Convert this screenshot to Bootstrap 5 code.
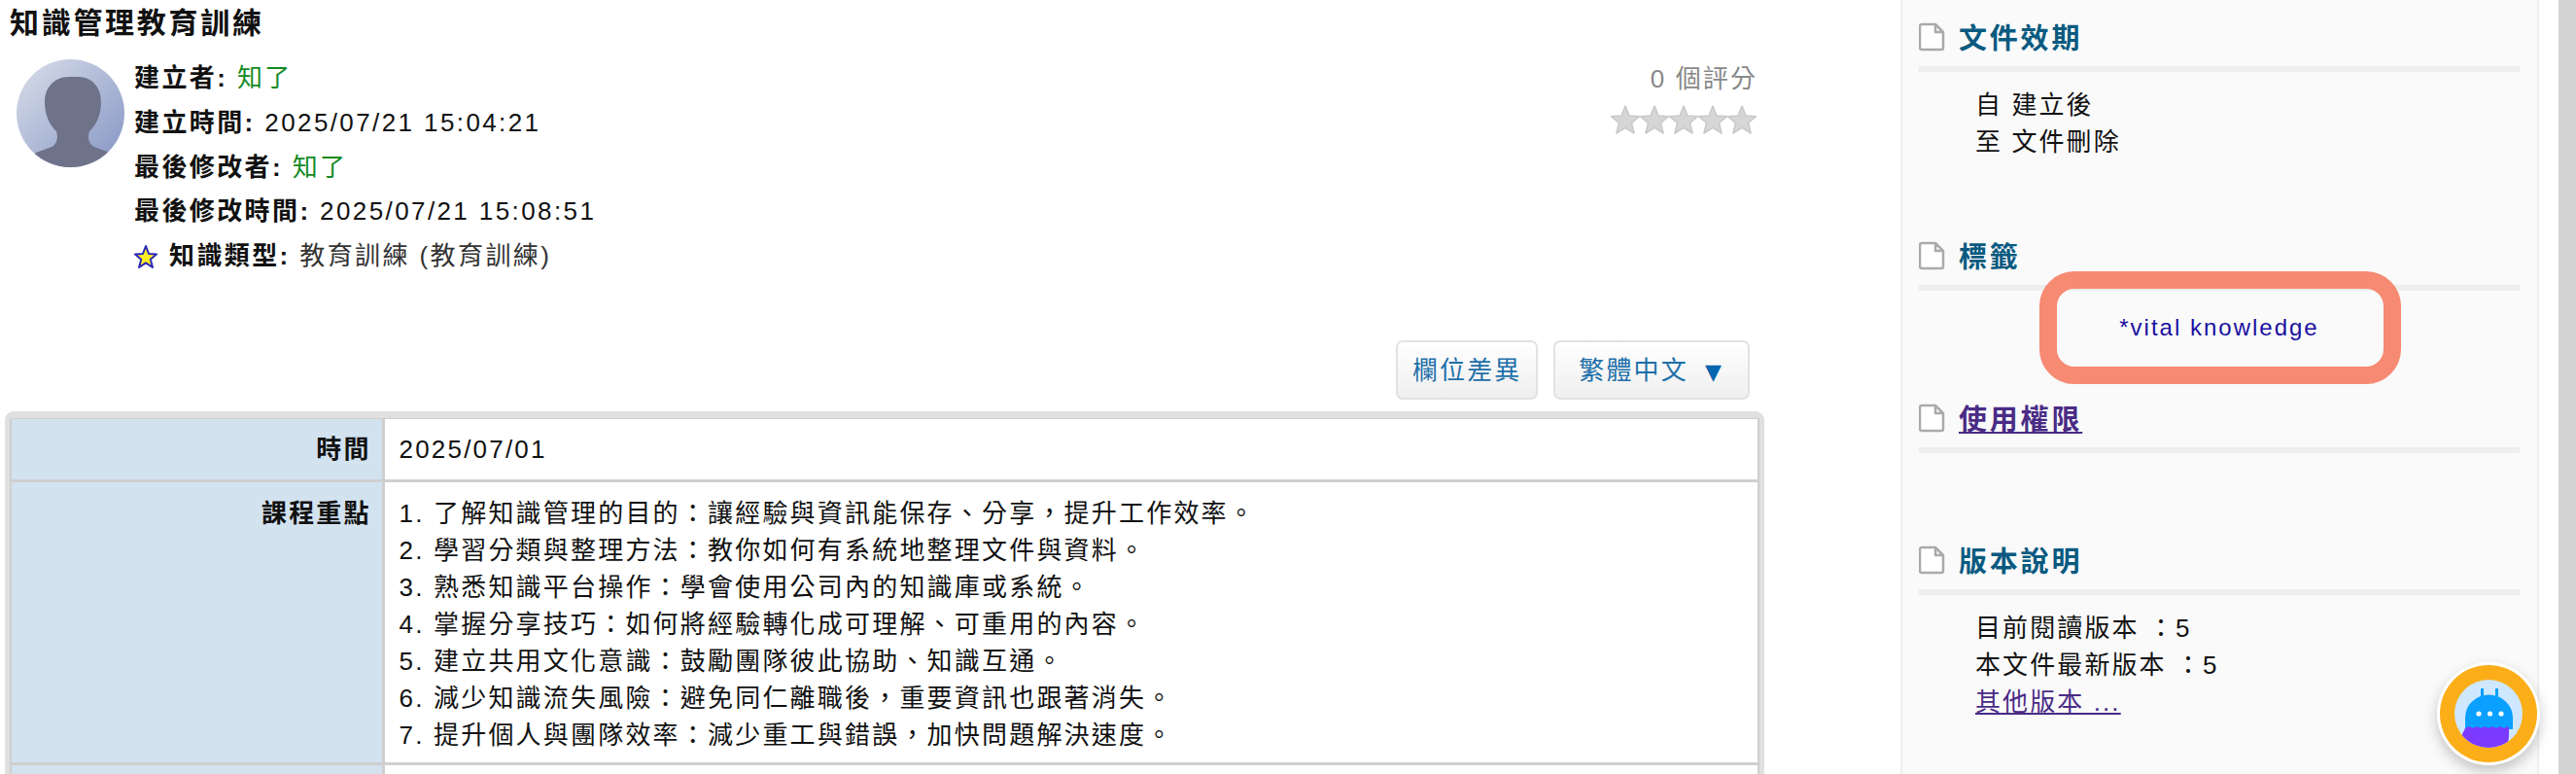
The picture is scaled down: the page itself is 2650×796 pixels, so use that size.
<!DOCTYPE html>
<html lang="zh-Hant">
<head>
  <meta charset="UTF-8">
  <meta name="viewport" content="width=device-width, initial-scale=1.0">
  <title>知識管理教育訓練</title>
  <link href="https://cdn.jsdelivr.net/npm/bootstrap@5.3.0/dist/css/bootstrap.min.css" rel="stylesheet">
  <style>
    body { font-family: "Liberation Sans", "Noto Sans CJK TC", sans-serif; font-size: 26px; letter-spacing: 2.1px; line-height: 38px; color: #111; background: #fff; }
    .page-wrap { height: 796px; overflow: hidden; }
    .main-col { width: 1815px; padding-left: 5px; flex: none; }
    .doc-title { font-size: 30px; font-weight: 700; letter-spacing: 2.7px; line-height: 48px; margin: 0 0 10px 5px; color: #111; }
    .meta-head { padding-left: 12px; height: 229px; }
    .avatar-pic { width: 111px; height: 111px; margin-top: 3px; margin-right: 10px; flex: none; }
    .meta-line { height: 45.8px; line-height: 45.8px; white-space: nowrap; letter-spacing: 2.4px; }
    .who { color: #118a1f; }
    .type-val { color: #333; }
    .rating-box { width: 160px; padding-top: 4px; margin-right: 7px; color: #888; text-align: right; white-space: nowrap; }
    .star-row { margin-top: 8px; }
    .btn-row { margin-top: 63px; margin-bottom: 12px; padding-right: 15px; }
    .btn-soft { height: 61px; padding: 0 15px; font-size: 26px; letter-spacing: 2.1px; line-height: 1; color: #1d6fa8; border: 2px solid #e2e2e2; border-radius: 7px; background: linear-gradient(#fff, #efefef); }
    .btn-soft:hover { color: #1d6fa8; border-color: #e2e2e2; }
    .btn-lang { padding: 0 27px 0 24px; }
    .lang-arrow { font-family: "DejaVu Sans", sans-serif; color: #0565ad; font-size: 22px; margin-left: 8px; letter-spacing: 0; }
    .table-frame { border: 5px solid #e0e0e0; border-top-width: 7px; border-bottom: 0; border-radius: 9px 9px 0 0; width: 1810px; }
    .field-table { --bs-table-border-color: #cfcfcf; table-layout: fixed; border-width: 0; }
    .field-table > tbody > tr > * { border-width: 3px; padding: 0; line-height: 38px; color: #111; }
    .field-table > tbody > tr > th { width: 383px; background: #d3e2ef; text-align: right; padding: 13px 11px 9px 0; vertical-align: top; }
    .field-table > tbody > tr > td { padding: 13px 10px 9px 15px; letter-spacing: 2.2px; }
    .field-table > tbody > tr:first-child > * { padding-top: 12px; padding-bottom: 12px; border-top-width: 0; }
    .field-table > tbody > tr > *:first-child { border-left: 2px solid #cfcfcf; }
    .field-table > tbody > tr > *:last-child { border-right: 2px solid #cfcfcf; }
    .side-panel { width: 657px; margin-left: 140px; padding: 23px 18px 0 17px; background: #fafafa; border-left: 2px solid #efefef; border-right: 2px solid #efefef; flex: none; }
    .side-head { padding-bottom: 15px; border-bottom: 6px solid #eee; box-sizing: content-box; height: 30px; }
    .side-head h5 { margin: 3px 0 0 14px; font-size: 29px; font-weight: 700; letter-spacing: 2.8px; line-height: 30px; color: #0a5a80; }
    .side-head a { color: #4a2b85; }
    .doc-ico { width: 27px; height: 30px; flex: none; }
    .side-body { padding: 15px 0 0 58px; }
    .sec-valid { margin-bottom: 83px; }
    .sec-tag { margin-bottom: 59px; }
    .sec-perm { margin-bottom: 95px; }
    .tag-line { padding: 19px 0 0; text-align: center; letter-spacing: 2px; font-size: 24px; color: #1a0fa0; }
    .tag-mark { position: absolute; left: 124px; top: -20px; width: 372px; height: 116px; border: 18px solid #f68a72; border-radius: 36px; }
    .side-link { color: #4a2b85; }
    .scroll-track { width: 18px; margin-left: 20px; background: #d3d3d3; flex: none; }
    .bot-btn { position: absolute; left: 2507px; top: 681px; width: 106px; height: 106px; border-radius: 50%; box-shadow: 0 6px 14px rgba(0,0,0,.22); }
  </style>
</head>
<body>
  <div class="page-wrap d-flex position-relative">
    <div class="main-col">
      <h1 class="doc-title">知識管理教育訓練</h1>

      <div class="meta-head d-flex justify-content-between">
        <div class="d-flex">
          <svg class="avatar-pic" viewBox="0 0 111 111">
            <defs>
              <linearGradient id="avBg" x1="0" y1="0" x2="1" y2="1">
                <stop offset="0" stop-color="#d9dfe9"/>
                <stop offset="1" stop-color="#8494c4"/>
              </linearGradient>
              <clipPath id="avClip"><circle cx="55.5" cy="55.5" r="55.5"/></clipPath>
            </defs>
            <circle cx="55.5" cy="55.5" r="55.5" fill="url(#avBg)"/>
            <g clip-path="url(#avClip)" fill="#6e7389">
              <path d="M54 18c-15 0-25 11-25 26 0 13 5 24 12 30 2 6 1 11-3 15-8 4-19 6-26 12l8 14h76l8-14c-7-6-18-8-26-12-4-4-5-9-3-15 7-6 12-17 12-30 0-15-9-26-24-26z"/>
            </g>
          </svg>
          <div>
            <div class="meta-line"><b>建立者:</b> <span class="who">知了</span></div>
            <div class="meta-line"><b>建立時間:</b> 2025/07/21 15:04:21</div>
            <div class="meta-line"><b>最後修改者:</b> <span class="who">知了</span></div>
            <div class="meta-line"><b>最後修改時間:</b> 2025/07/21 15:08:51</div>
            <div class="meta-line d-flex align-items-center">
              <svg width="24" height="26" viewBox="0 0 24 26"><path d="M12 2l3 8 8 .6-6.200 5.200 2.200 8.200-7-4.600-7 4.600 2.200-8.200L1 10.600 9 10z" fill="#ffee22" stroke="#2a2ab8" stroke-width="2" stroke-linejoin="round"/></svg>
              <span class="ms-2 ps-1"><b>知識類型:</b> <span class="type-val">教育訓練 (教育訓練)</span></span>
            </div>
          </div>
        </div>
        <div class="rating-box">
          <div>0 個評分</div>
          <div class="star-row d-flex justify-content-end">
            <svg width="151" height="30" viewBox="0 0 151 30">
              <defs><path id="grayStar" d="M15 1l4 10 10.500.8-8 6.700 2.600 10.500-9.100-5.700-9.100 5.700 2.600-10.500-8-6.700L11 11z" fill="#d6d6d6" stroke="#c8c8c8" stroke-width="1.500" stroke-linejoin="round"/></defs>
              <use href="#grayStar"/>
              <use href="#grayStar" x="30"/>
              <use href="#grayStar" x="60"/>
              <use href="#grayStar" x="90"/>
              <use href="#grayStar" x="120"/>
            </svg>
          </div>
        </div>
      </div>

      <div class="btn-row d-flex justify-content-end gap-3">
        <button type="button" class="btn btn-soft">欄位差異</button>
        <button type="button" class="btn btn-soft btn-lang">繁體中文 <span class="lang-arrow">▼</span></button>
      </div>

      <div class="table-frame">
        <table class="table table-bordered field-table mb-0">
          <tbody>
            <tr>
              <th>時間</th>
              <td>2025/07/01</td>
            </tr>
            <tr>
              <th>課程重點</th>
              <td>
                1. 了解知識管理的目的&#xFF1A;讓經驗與資訊能保存、分享&#xFF0C;提升工作效率。<br>
                2. 學習分類與整理方法&#xFF1A;教你如何有系統地整理文件與資料。<br>
                3. 熟悉知識平台操作&#xFF1A;學會使用公司內的知識庫或系統。<br>
                4. 掌握分享技巧&#xFF1A;如何將經驗轉化成可理解、可重用的內容。<br>
                5. 建立共用文化意識&#xFF1A;鼓勵團隊彼此協助、知識互通。<br>
                6. 減少知識流失風險&#xFF1A;避免同仁離職後&#xFF0C;重要資訊也跟著消失。<br>
                7. 提升個人與團隊效率&#xFF1A;減少重工與錯誤&#xFF0C;加快問題解決速度。
              </td>
            </tr>
            <tr>
              <th>&nbsp;</th>
              <td>&nbsp;</td>
            </tr>
          </tbody>
        </table>
      </div>
    </div>

    <aside class="side-panel">
      <section class="sec-valid">
        <div class="side-head d-flex align-items-center">
          <svg class="doc-ico" viewBox="0 0 27 30"><path d="M3 2h14l8 8v16a2 2 0 0 1-2 2H3a2 2 0 0 1-2-2V4a2 2 0 0 1 2-2z M17 2v8h8" fill="#fff" stroke="#aaa" stroke-width="2.500" stroke-linejoin="round"/></svg>
          <h5>文件效期</h5>
        </div>
        <div class="side-body">
          <div>自 建立後</div>
          <div>至 文件刪除</div>
        </div>
      </section>

      <section class="sec-tag">
        <div class="side-head d-flex align-items-center">
          <svg class="doc-ico" viewBox="0 0 27 30"><path d="M3 2h14l8 8v16a2 2 0 0 1-2 2H3a2 2 0 0 1-2-2V4a2 2 0 0 1 2-2z M17 2v8h8" fill="#fff" stroke="#aaa" stroke-width="2.500" stroke-linejoin="round"/></svg>
          <h5>標籤</h5>
        </div>
        <div class="tag-line position-relative">
          *vital knowledge
          <div class="tag-mark"></div>
        </div>
      </section>

      <section class="sec-perm">
        <div class="side-head d-flex align-items-center">
          <svg class="doc-ico" viewBox="0 0 27 30"><path d="M3 2h14l8 8v16a2 2 0 0 1-2 2H3a2 2 0 0 1-2-2V4a2 2 0 0 1 2-2z M17 2v8h8" fill="#fff" stroke="#aaa" stroke-width="2.500" stroke-linejoin="round"/></svg>
          <h5><a href="#">使用權限</a></h5>
        </div>
      </section>

      <section>
        <div class="side-head d-flex align-items-center">
          <svg class="doc-ico" viewBox="0 0 27 30"><path d="M3 2h14l8 8v16a2 2 0 0 1-2 2H3a2 2 0 0 1-2-2V4a2 2 0 0 1 2-2z M17 2v8h8" fill="#fff" stroke="#aaa" stroke-width="2.500" stroke-linejoin="round"/></svg>
          <h5>版本說明</h5>
        </div>
        <div class="side-body">
          <div>目前閱讀版本 &#xFF1A;5</div>
          <div>本文件最新版本 &#xFF1A;5</div>
          <div><a href="#" class="side-link">其他版本 ...</a></div>
        </div>
      </section>
    </aside>

    <div class="scroll-track"></div>

    <svg class="bot-btn" viewBox="-53 -53 106 106">
      <defs><clipPath id="botClip"><circle r="35"/></clipPath></defs>
      <circle r="53" fill="#fff"/>
      <circle r="50" fill="#fbae17"/>
      <circle r="35" fill="#cfe8ff"/>
      <g clip-path="url(#botClip)">
        <path d="M-8-26h3v8h-3z M7-26h3v8H7z" fill="#0aa0ff"/>
        <path d="M-24 16V4a24 23 0 0 1 49 0v12z" fill="#0aa0ff"/>
        <path d="M-24 15l4-2 4 2 4-2 4 2 4-2 4 2 4-2 4 2 4-2 4 2 4-2 1 2v8a24 20 0 0 1-49 0z" fill="#7c3aff"/>
      </g>
      <circle cx="-10" r="2.600" fill="#fff"/>
      <circle cx="1.500" r="2.600" fill="#fff"/>
      <circle cx="13" r="2.600" fill="#fff"/>
    </svg>
  </div>
  <script src="https://cdn.jsdelivr.net/npm/bootstrap@5.3.0/dist/js/bootstrap.bundle.min.js"></script>
</body>
</html>
